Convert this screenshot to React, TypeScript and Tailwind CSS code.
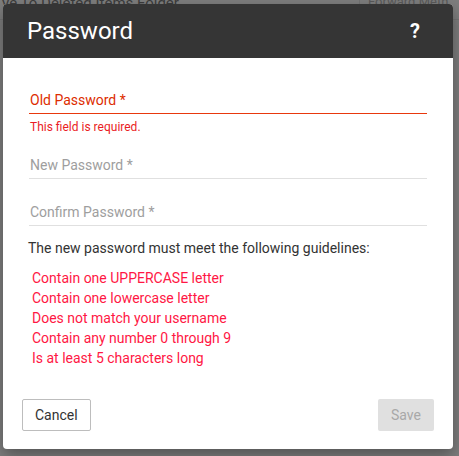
const guidelines = [
  'Contain one UPPERCASE letter',
  'Contain one lowercase letter',
  'Does not match your username',
  'Contain any number 0 through 9',
  'Is at least 5 characters long',
];

function Field({ label, focused }: { label: string; focused?: boolean }) {
  return (
    <div className="pt-[3px]">
      <div className={focused ? 'pl-[1px] h-[20px] text-[14px] leading-[20px] text-[#dd2c00]' : 'pl-[1px] h-[20px] text-[14px] leading-[20px] text-[#9e9e9e]'}>
        {label}
      </div>
      <div className={focused ? 'mt-[3px] h-px bg-[#e8380d]' : 'mt-[3px] h-px bg-[#e0e0e0]'} />
    </div>
  );
}

export default function App() {
  return (
    <div className="relative w-[459px] h-[456px] overflow-hidden bg-[#7e7e7e] font-['Roboto',sans-serif]">
      {/* dimmed page behind the dialog */}
      <div className="flex h-[20px] border-b border-[#747474]">
        <div className="flex-1 pl-[2px] text-[15px] leading-[14px] text-[#3c3c3c] -mt-[4px]">
          ve To Deleted Items Folder
        </div>
        <div className="w-[100px] border-l border-[#737373] pl-[8px] text-[13px] leading-[10px] text-[#5a5a5a] -mt-[3px]">
          Forward Meth
        </div>
      </div>

      {/* dialog */}
      <div className="absolute left-[3px] top-[4px] w-[450px] h-[445px] flex flex-col bg-white rounded-[4px] overflow-hidden shadow-[0_6px_16px_rgba(0,0,0,0.35)]">
        <div className="h-[54px] shrink-0 bg-[#353535] flex items-center justify-between pl-[24px] pr-[33px]">
          <h1 className="text-[24px] leading-[28px] text-white">Password</h1>
          <span className="text-[20px] font-bold text-white">?</span>
        </div>

        <div className="px-[26px] pt-[29px]">
          <Field label="Old Password *" focused />
          <div className="mt-[6px] pl-[1px] text-[12px] leading-[14px] text-[#ea1c24]">This field is required.</div>

          <div className="mt-[18px]">
            <Field label="New Password *" />
          </div>
          <div className="mt-[20px]">
            <Field label="Confirm Password *" />
          </div>

          <p className="mt-[12px] -ml-[1px] text-[14px] leading-[20px] text-[#333]">
            The new password must meet the following guidelines:
          </p>
          <ul className="mt-[10px] pl-[3px] text-[14px] leading-[20px] text-[#ff1744]">
            {guidelines.map((g) => (
              <li key={g}>{g}</li>
            ))}
          </ul>
        </div>

        <div className="mt-auto flex items-center justify-between px-[19px] pb-[18px]">
          <button className="h-[32px] px-[12px] border border-[#bdbdbd] rounded-[2px] text-[14px] text-[#333] bg-white">
            Cancel
          </button>
          <button disabled className="h-[32px] px-[13px] rounded-[2px] text-[14px] text-[#a8a8a8] bg-[#e0e0e0]">
            Save
          </button>
        </div>
      </div>
    </div>
  );
}
